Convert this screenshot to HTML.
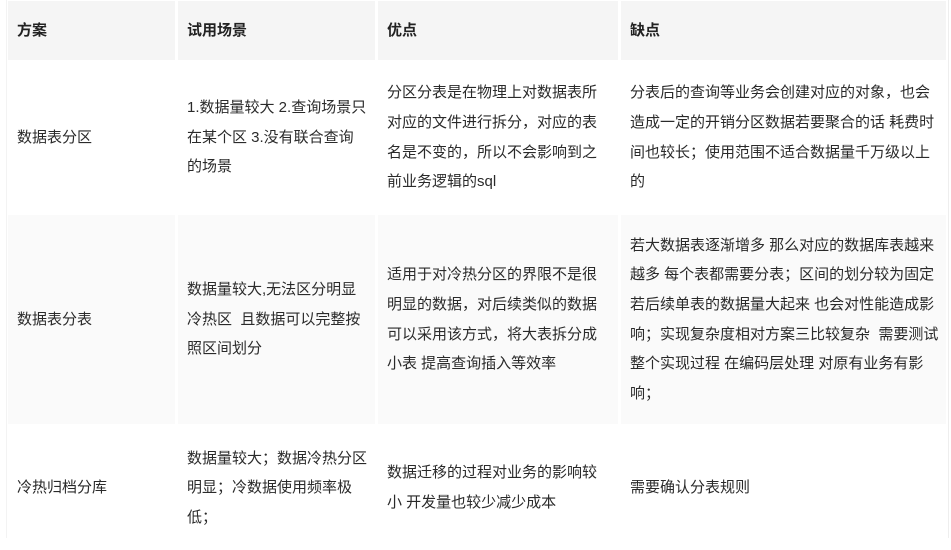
<!DOCTYPE html>
<html><head><meta charset="utf-8"><style>
body{margin:0;width:951px;height:538px;overflow:hidden;background:#fff;font-family:"Liberation Sans","Noto Sans CJK SC",sans-serif;font-size:15px;color:#2a2a2a;}
.c{position:absolute;display:flex;flex-direction:column;justify-content:center;padding-left:9px;box-sizing:border-box;line-height:29.6px;white-space:nowrap;}
.h{background:#f5f5f5;font-weight:bold;color:#222;}
.g{background:#fafafa;}
.edge{position:absolute;left:948px;top:0;width:1px;height:538px;background:#eee;}
.edge2{position:absolute;left:6px;top:0;width:1px;height:538px;background:#f3f3f3;}
</style></head><body>
<div class="edge2"></div>
<div class="c h" style="left:8px;top:1px;width:167px;height:59px">方案</div>
<div class="c h" style="left:178px;top:1px;width:197px;height:59px">试用场景</div>
<div class="c h" style="left:378px;top:1px;width:240px;height:59px">优点</div>
<div class="c h" style="left:621px;top:1px;width:325px;height:59px">缺点</div>

<div class="c" style="left:8px;top:62px;width:167px;height:151px">数据表分区</div>
<div class="c" style="left:178px;top:62px;width:197px;height:151px">1.数据量较大 2.查询场景只<br>在某个区 3.没有联合查询<br>的场景</div>
<div class="c" style="left:378px;top:62px;width:240px;height:151px">分区分表是在物理上对数据表所<br>对应的文件进行拆分，对应的表<br>名是不变的，所以不会影响到之<br>前业务逻辑的sql</div>
<div class="c" style="left:621px;top:62px;width:325px;height:151px">分表后的查询等业务会创建对应的对象，也会<br>造成一定的开销分区数据若要聚合的话 耗费时<br>间也较长；使用范围不适合数据量千万级以上<br>的</div>

<div class="c g" style="left:8px;top:215px;width:167px;height:209px">数据表分表</div>
<div class="c g" style="left:178px;top:215px;width:197px;height:209px">数据量较大,无法区分明显<br>冷热区&nbsp; 且数据可以完整按<br>照区间划分</div>
<div class="c g" style="left:378px;top:215px;width:240px;height:209px">适用于对冷热分区的界限不是很<br>明显的数据，对后续类似的数据<br>可以采用该方式，将大表拆分成<br>小表 提高查询插入等效率</div>
<div class="c g" style="left:621px;top:215px;width:325px;height:209px">若大数据表逐渐增多 那么对应的数据库表越来<br>越多 每个表都需要分表；区间的划分较为固定<br>若后续单表的数据量大起来 也会对性能造成影<br>响；实现复杂度相对方案三比较复杂&nbsp; 需要测试<br>整个实现过程 在编码层处理 对原有业务有影<br>响；</div>

<div class="c" style="left:8px;top:426px;width:167px;height:124px">冷热归档分库</div>
<div class="c" style="left:178px;top:426px;width:197px;height:124px">数据量较大；数据冷热分区<br>明显；冷数据使用频率极<br>低；</div>
<div class="c" style="left:378px;top:426px;width:240px;height:124px">数据迁移的过程对业务的影响较<br>小 开发量也较少减少成本</div>
<div class="c" style="left:621px;top:426px;width:325px;height:124px">需要确认分表规则</div>
<div class="edge"></div>
</body></html>
